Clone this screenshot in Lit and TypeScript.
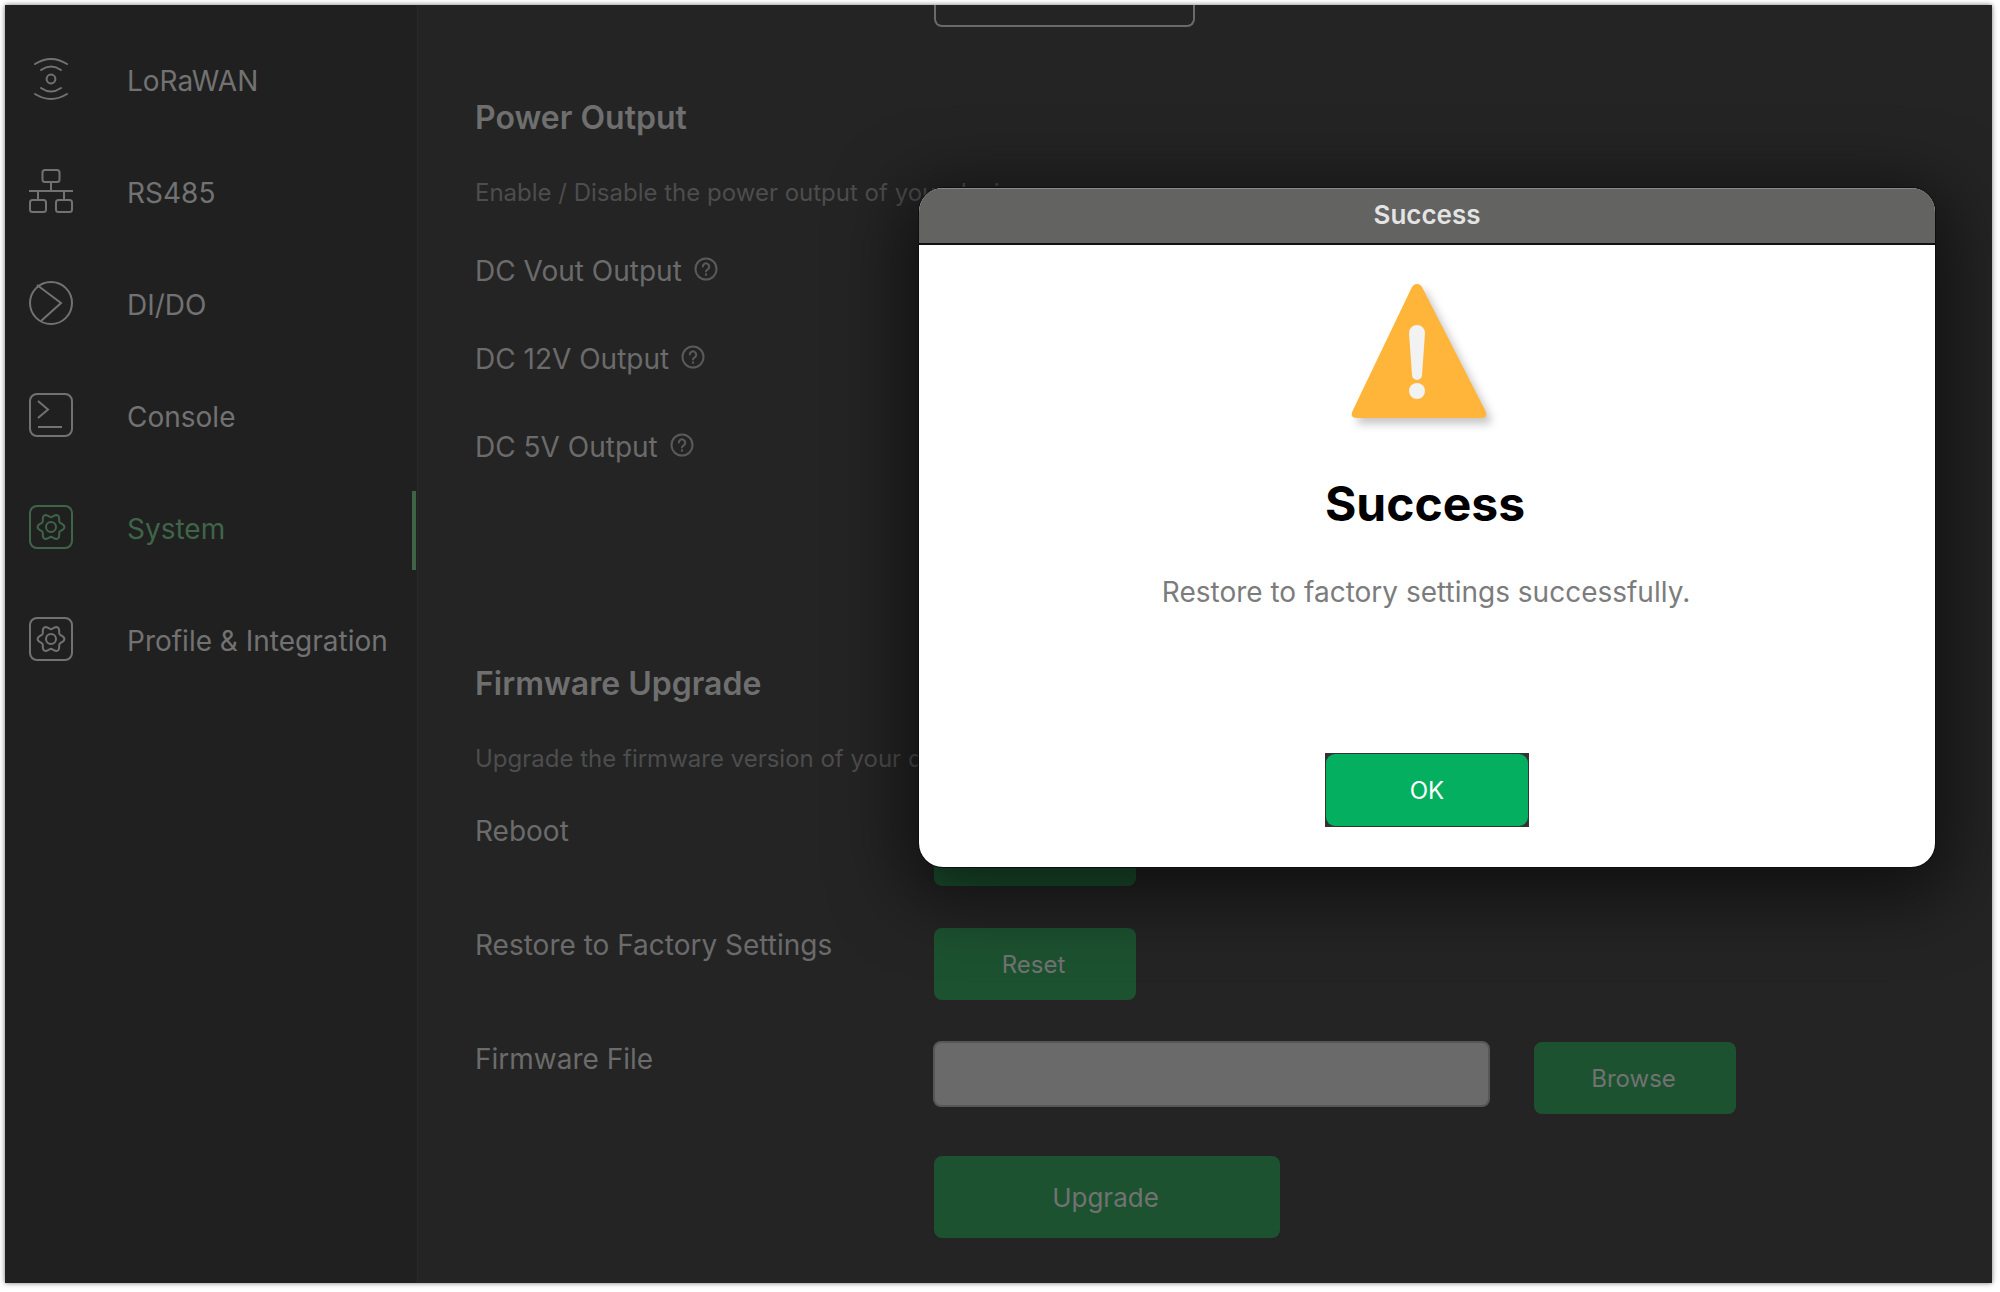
import { html, css, LitElement, svg } from 'lit';
import { customElement } from 'lit/decorators.js';

// six lobed outline used by the two gear icons
function gearPath(cx: number, cy: number) {
  const pts: string[] = [];
  for (let a = 0; a < 360; a += 6) {
    const t = (a * Math.PI) / 180;
    const r = 11.6 + 1.8 * Math.cos(6 * t);
    pts.push(`${(cx + r * Math.cos(t)).toFixed(2)} ${(cy + r * Math.sin(t)).toFixed(2)}`);
  }
  return `M${pts.join('L')}Z`;
}

const gear = svg`
  <rect x="1" y="1" width="42" height="42" rx="7" />
  <path d=${gearPath(22, 22)} stroke-linejoin="round" />
  <circle cx="22" cy="22" r="5" />
`;

const icons: Record<string, unknown> = {
  lora: svg`
    <path d="M6 7Q22 -3 38 7" stroke-linecap="round" />
    <path d="M12 13Q22 6 32 13" stroke-linecap="round" />
    <circle cx="22" cy="22" r="4.4" />
    <path d="M12 31Q22 38 32 31" stroke-linecap="round" />
    <path d="M6 37Q22 47 38 37" stroke-linecap="round" />
  `,
  rs485: svg`
    <rect x="13.5" y="1" width="17" height="12" rx="2.5" />
    <path d="M22 13V22M0 22H44M9 22V31M35 22V31" />
    <rect x="1" y="31" width="16" height="12" rx="2.5" />
    <rect x="27" y="31" width="16" height="12" rx="2.5" />
  `,
  dido: svg`
    <circle cx="22" cy="22" r="21" />
    <path d="M8 4L32 22L12 40" />
  `,
  console: svg`
    <rect x="1" y="1" width="42" height="42" rx="7" />
    <path d="M9 8L19 16.5L9 25M9 34H33" />
  `,
  gear,
};

@customElement('app-root')
export class AppRoot extends LitElement {
  static styles = css`
    :host {
      display: block;
      height: 1292px;
      box-sizing: border-box;
      padding: 5px 8px 8px 5px;
      background: #fff;
      font-family: Inter, 'Liberation Sans', sans-serif;
    }
    .window {
      position: relative;
      display: flex;
      height: 1278px;
      overflow: hidden;
      background: #242424;
      box-shadow: 0 0 5px rgba(0, 0, 0, 0.55);
    }
    .sidebar {
      flex: none;
      width: 413px;
      box-sizing: border-box;
      padding-top: 18px;
      background: #202020;
      border-right: 1px solid #292929;
    }
    .nav-item {
      position: relative;
      display: flex;
      align-items: center;
      gap: 54px;
      height: 112px;
      padding-left: 24px;
      color: #727272;
      font-size: 28px;
    }
    .nav-item svg {
      flex: none;
      width: 44px;
      height: 44px;
      overflow: visible;
      fill: none;
      stroke: currentColor;
      stroke-width: 2px;
    }
    .nav-item span {
      margin-top: 3px;
    }
    .nav-item.active {
      color: #3f6549;
    }
    .nav-item.active::after {
      content: '';
      position: absolute;
      top: 20px;
      right: 1px;
      width: 4px;
      height: 79px;
      background: #3e6347;
    }
    .main {
      flex: 1;
      padding-left: 57px;
    }
    .top-box {
      width: 261px;
      height: 22px;
      margin-left: 459px;
      box-sizing: border-box;
      border: 2px solid #6a6a6a;
      border-top: 0;
      border-radius: 0 0 8px 8px;
    }
    h2 {
      margin: 0;
      font-size: 32px;
      font-weight: 600;
      line-height: 40px;
      color: #6f6f6f;
    }
    .power-title {
      margin-top: 71px;
    }
    .firmware-title {
      margin-top: 200px;
    }
    .sub {
      margin-top: 40px;
      font-size: 24px;
      line-height: 30px;
      color: #4d4d4d;
    }
    .power-rows {
      display: flex;
      flex-direction: column;
      gap: 54px;
      margin-top: 46px;
    }
    .label {
      display: flex;
      align-items: center;
      align-self: start;
      gap: 12px;
      font-size: 28px;
      line-height: 34px;
      color: #6b6b6b;
    }
    .label svg {
      flex: none;
      width: 24px;
      height: 24px;
      margin-top: -4px;
      fill: none;
      stroke: #5a5a5a;
      stroke-width: 2px;
    }
    .form {
      display: grid;
      grid-template-columns: 459px 1fr;
      row-gap: 42px;
      margin-top: 40px;
    }
    .btn {
      display: flex;
      align-items: center;
      justify-content: center;
      width: 202px;
      height: 72px;
      box-sizing: border-box;
      padding-right: 3px;
      border-radius: 8px;
      background: #1c5230;
      color: #727272;
      font-size: 24px;
    }
    .btn.wide {
      width: 346px;
      height: 82px;
      font-size: 26px;
    }
    .file-row {
      display: flex;
      align-items: flex-start;
      gap: 44px;
      margin-left: -1px;
    }
    .file-input {
      width: 557px;
      height: 66px;
      margin-top: -1px;
      box-sizing: border-box;
      border: 2px solid #575757;
      border-radius: 8px;
      background: #6a6a6a;
    }
    .dialog {
      position: absolute;
      left: 914px;
      top: 183px;
      display: flex;
      flex-direction: column;
      align-items: center;
      width: 1016px;
      height: 679px;
      border-radius: 24px;
      overflow: hidden;
      background: #fff;
      color: #000;
      box-shadow: 0 0 0 1px #0e0e0e, 0 16px 70px 16px rgba(0, 0, 0, 0.55);
    }
    .dialog-head {
      align-self: stretch;
      flex: none;
      height: 57px;
      box-sizing: border-box;
      border-top: 1px solid #8a8a88;
      border-bottom: 2px solid #111;
      background: #636361;
      color: #e4e4e4;
      font-size: 26px;
      font-weight: 600;
      line-height: 52px;
      text-align: center;
    }
    .warn {
      flex: none;
      width: 150px;
      height: 150px;
      margin: 34px 16px 0 0;
      filter: drop-shadow(5px 6px 4px rgba(0, 0, 0, 0.22));
    }
    .dialog h1 {
      margin: 46px 4px 0 0;
      font-size: 48px;
      font-weight: 700;
      line-height: 58px;
    }
    .dialog p {
      margin: 42px 2px 0 0;
      font-size: 28px;
      line-height: 34px;
      color: #7c7c7c;
    }
    .ok {
      display: flex;
      flex: none;
      margin-top: 144px;
      width: 204px;
      height: 74px;
      box-sizing: border-box;
      padding: 1px;
      background: #333;
    }
    .ok span {
      flex: 1;
      display: flex;
      align-items: center;
      justify-content: center;
      border-radius: 9px;
      background: #04b05f;
      color: #fff;
      font-size: 24px;
    }
  `;

  private nav = [
    { icon: 'lora', label: 'LoRaWAN' },
    { icon: 'rs485', label: 'RS485' },
    { icon: 'dido', label: 'DI/DO' },
    { icon: 'console', label: 'Console' },
    { icon: 'gear', label: 'System', active: true },
    { icon: 'gear', label: 'Profile & Integration' },
  ];

  private _help() {
    return html`<svg viewBox="0 0 24 24">
      <circle cx="12" cy="12" r="10.5" />
      <path d="M8.8 9.6a3.2 3.2 0 1 1 4.9 2.7c-1 .6-1.7 1.1-1.7 2.2" stroke-linecap="round" />
      <path d="M12 17.4v.4" stroke-linecap="round" stroke-width="2.2" />
    </svg>`;
  }

  render() {
    return html`
      <div class="window">
        <nav class="sidebar">
          ${this.nav.map(
            (n) => html`
              <div class="nav-item ${n.active ? 'active' : ''}">
                <svg viewBox="0 0 44 44">${icons[n.icon]}</svg>
                <span>${n.label}</span>
              </div>
            `
          )}
        </nav>
        <main class="main">
          <div class="top-box"></div>
          <h2 class="power-title">Power Output</h2>
          <div class="sub">Enable / Disable the power output of your device</div>
          <div class="power-rows">
            <div class="label">DC Vout Output ${this._help()}</div>
            <div class="label">DC 12V Output ${this._help()}</div>
            <div class="label">DC 5V Output ${this._help()}</div>
          </div>
          <h2 class="firmware-title">Firmware Upgrade</h2>
          <div class="sub">Upgrade the firmware version of your device</div>
          <div class="form">
            <div class="label">Reboot</div>
            <div class="btn">Reboot</div>
            <div class="label">Restore to Factory Settings</div>
            <div class="btn">Reset</div>
            <div class="label">Firmware File</div>
            <div class="file-row">
              <div class="file-input"></div>
              <div class="btn">Browse</div>
            </div>
            <div></div>
            <div class="btn wide">Upgrade</div>
          </div>
        </main>
        <div class="dialog">
          <div class="dialog-head">Success</div>
          <svg class="warn" viewBox="0 0 150 150">
            <path
              d="M73 5Q77 5 79 10L141 131Q145 139 137 139H13Q5 139 9 131L67 10Q69 5 73 5Z"
              fill="#ffb539"
            />
            <path d="M65 54a8 8 0 0 1 16 0L78 96a5 5 0 0 1-10 0Z" fill="#f2f2f2" />
            <circle cx="73" cy="112" r="8" fill="#f2f2f2" />
          </svg>
          <h1>Success</h1>
          <p>Restore to factory settings successfully.</p>
          <div class="ok"><span>OK</span></div>
        </div>
      </div>
    `;
  }
}
